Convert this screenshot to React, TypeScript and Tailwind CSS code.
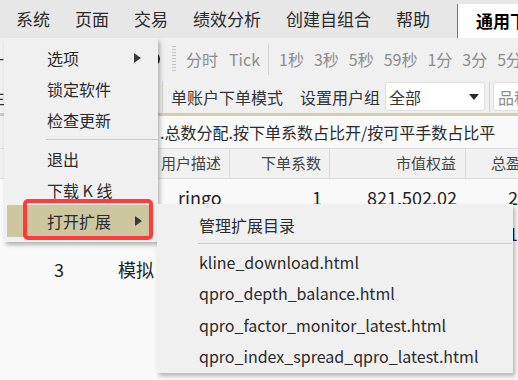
const menus = ['系统', '页面', '交易', '绩效分析', '创建自组合', '帮助'];
const periods = ['1秒', '3秒', '5秒', '59秒', '1分', '3分', '5分', '15分'];
const rows = [
  { no: '1', name: '', desc: 'ringo', k: '1', equity: '821,502.02', pnl: '21,502.02' },
  { no: '2', name: '', desc: '', k: '1', equity: '1,000,000.00', pnl: '1' },
  { no: '3', name: '模拟', desc: '', k: '', equity: '', pnl: '' },
];
const extensions = [
  'kline_download.html',
  'qpro_depth_balance.html',
  'qpro_factor_monitor_latest.html',
  'qpro_index_spread_qpro_latest.html',
];

function RightArrow() {
  return <span className="h-0 w-0 border-y-[5.5px] border-l-[7px] border-y-transparent border-l-[#3a3a3a]" />;
}

function Sep({ h = 'h-[30px]' }: { h?: string }) {
  return <span className={`w-px shrink-0 bg-[#d2d2d2] ${h}`} />;
}

export default function App() {
  return (
    <div className="relative h-[380px] w-[518px] overflow-hidden bg-[#f9f9f9] font-['Noto_Sans_CJK_SC',sans-serif] text-[#333]">
      {/* menu bar */}
      <div className="flex h-[38px] bg-[#e7e7e7]">
        <div className="flex items-center gap-[25px] pl-[16px] text-[17px] text-[#2b2b2b]">
          {menus.map((m) => (
            <span key={m}>{m}</span>
          ))}
        </div>
        <div className="ml-auto mt-[4px] flex w-[61px] items-center overflow-hidden whitespace-nowrap border-l border-[#777] bg-white pl-[18px] text-[17px] font-semibold text-black">
          通用下单
        </div>
      </div>

      {/* toolbar row 1 */}
      <div className="flex h-[42px] items-center whitespace-nowrap bg-[#f0f0f0] text-[16px] text-[#8c8c8c]">
        <div className="w-[146px] shrink-0 overflow-hidden text-[#333]">
          <span className="-ml-[12px] inline-block">一</span>
        </div>
        <span className="h-[14px] w-[14px] shrink-0 rounded-full bg-[#1e1e1e]" />
        <span className="ml-[12px] h-[26px] w-[4px] shrink-0 bg-[repeating-linear-gradient(to_bottom,#c2c2c2_0_1px,transparent_1px_3px)]" />
        <span className="ml-[10px]">分时</span>
        <span className="ml-[11px]">Tick</span>
        <span className="ml-[8px] h-[31px] w-px shrink-0 bg-[#d2d2d2]" />
        <div className="ml-[10px] flex gap-[10px]">
          {periods.map((p) => (
            <span key={p}>{p}</span>
          ))}
        </div>
      </div>

      {/* toolbar row 2 */}
      <div className="flex h-[33px] items-center whitespace-nowrap bg-[#f0f0f0] text-[16px] text-[#333]">
        <div className="w-[162px] shrink-0 overflow-hidden">
          <span className="-ml-[11px] inline-block">生</span>
        </div>
        <Sep h="h-[32px]" />
        <span className="ml-[8px]">单账户下单模式</span>
        <span className="ml-[8px]"><Sep /></span>
        <span className="ml-[9px]">设置用户组</span>
        <div className="ml-[5px] flex h-[29px] w-[100px] shrink-0 items-center rounded-[3px] border border-[#dedede] bg-white pl-[3px] pr-[5px]">
          <span>全部</span>
          <span className="ml-auto h-0 w-0 border-x-[5px] border-t-[6px] border-x-transparent border-t-[#2a2a2a]" />
        </div>
        <span className="ml-[4px] h-[30px] w-px shrink-0 bg-[#d2d2d2]" />
        <div className="ml-[3px] flex h-[29px] w-[60px] shrink-0 items-center rounded-[3px] border border-[#dedede] bg-white pl-[4px] text-[#8c8c8c]">
          品种
        </div>
      </div>

      <div className="h-[3px] bg-[#d3ceae]" />

      {/* info row */}
      <div className="flex h-[32px] items-center whitespace-nowrap text-[16px] text-[#2b2b2b]">
        <div className="h-full w-[157px] shrink-0 bg-[#f0f0f0]" />
        <span className="ml-[3px]">.总数分配.按下单系数占比开/按可平手数占比平</span>
      </div>

      {/* table header */}
      <div className="flex h-[31px] items-center whitespace-nowrap border-y border-[#dcdcdc] bg-[#f1f1f1] text-[15px] text-[#444]">
        <span className="w-[100px] shrink-0 pl-[30px]">序号</span>
        <span className="w-[57px] shrink-0 pl-[10px]">账户</span>
        <span className="flex h-full w-[72px] shrink-0 items-center pl-[4px]">用户描述</span>
        <span className="flex h-full w-[100px] shrink-0 items-center justify-end border-l border-[#dcdcdc] pr-[8px]">下单系数</span>
        <span className="flex h-full w-[136px] shrink-0 items-center justify-end border-l border-[#dcdcdc] pr-[9px]">市值权益</span>
        <span className="flex h-full flex-1 items-center border-l border-[#dcdcdc] pl-[25px]">总盈亏</span>
      </div>

      {/* rows */}
      {rows.map((r) => (
        <div key={r.no} className="flex h-[36px] items-center whitespace-nowrap text-[18px] text-[#222]">
          <span className="w-[100px] shrink-0 pl-[54px]">{r.no}</span>
          <span className="w-[57px] shrink-0 overflow-hidden pl-[18px]">{r.name}</span>
          <span className="w-[72px] shrink-0 pl-[21px]">{r.desc}</span>
          <span className="w-[100px] shrink-0 pr-[7px] text-right">{r.k}</span>
          <span className="w-[136px] shrink-0 pr-[8px] text-right">{r.equity}</span>
          <span className="flex-1 overflow-hidden pl-[43px]">{r.pnl}</span>
        </div>
      ))}

      {/* system dropdown menu */}
      <div className="absolute left-[4px] top-[38px] w-[154px] bg-[#f0f0f0] pb-[5px] pt-[4px] text-[16px] text-[#2b2b2b] shadow-[2px_3px_4px_rgba(0,0,0,0.28)]">
        <div className="mx-[3px] flex h-[31px] items-center pl-[40px] pr-[14px]">
          <span>选项</span>
          <span className="ml-auto flex"><RightArrow /></span>
        </div>
        <div className="mx-[3px] flex h-[31px] items-center pl-[40px]">锁定软件</div>
        <div className="mx-[3px] flex h-[31px] items-center pl-[40px]">检查更新</div>
        <div className="flex h-[8px] items-center pl-[42px]">
          <div className="h-px w-full bg-[#cacaca]" />
        </div>
        <div className="mx-[3px] flex h-[31px] items-center pl-[40px]">退出</div>
        <div className="mx-[3px] flex h-[31px] items-center pl-[40px]">下载 K 线</div>
        <div className="ml-[3px] mr-[6px] flex h-[32px] items-center bg-[#ccc79f] pl-[40px] pr-[10px]">
          <span>打开扩展</span>
          <span className="ml-auto flex"><RightArrow /></span>
        </div>
      </div>

      {/* annotation box */}
      <div className="absolute left-[23px] top-[199px] h-[41px] w-[130px] rounded-[5px] border-[4px] border-[#ff3b3b]" />

      {/* extensions submenu */}
      <div className="absolute left-[157px] top-[204px] w-[356px] bg-[#f0f0f0] pb-[1px] pt-[5px] text-[16px] text-[#2b2b2b] shadow-[2px_3px_4px_rgba(0,0,0,0.28)]">
        <div className="flex h-[31px] items-center pl-[42px]">管理扩展目录</div>
        <div className="flex h-[6px] items-center pl-[41px] pr-[1px]">
          <div className="h-px w-full bg-[#cacaca]" />
        </div>
        {extensions.map((e) => (
          <div key={e} className="flex h-[31.5px] items-center pl-[42px]">
            {e}
          </div>
        ))}
      </div>
    </div>
  );
}
